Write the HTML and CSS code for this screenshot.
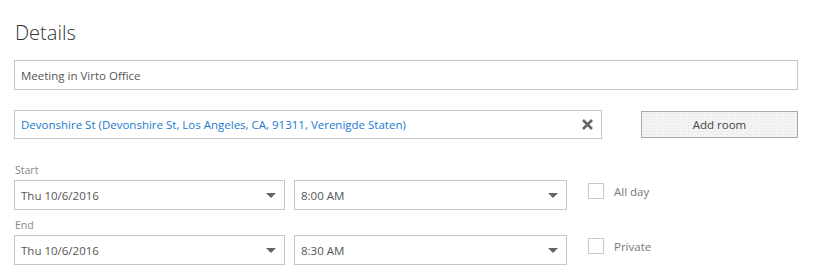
FILE: index.html
```html
<!DOCTYPE html>
<html lang="en">
  <head>
    <meta charset="UTF-8" />
    <title>Details</title>
    <link rel="stylesheet" href="styles.css">
  </head>
  <body>
    <div class="main-container">
      <h1 class="page-title">Details</h1>
      <div class="text-input subject">Meeting in Virto Office</div>

      <div class="location-row">
        <div class="text-input location">
          <span class="location-text">Devonshire St (Devonshire St, Los Angeles, CA, 91311, Verenigde Staten)</span>
          <svg class="clear-icon" width="13" height="13" viewBox="0 0 13 13">
            <path d="M2 2 L11 11 M11 2 L2 11" stroke="#666" stroke-width="2.6" />
          </svg>
        </div>
        <button class="btn" type="button">Add room</button>
      </div>

      <div class="label">Start</div>
      <div class="time-row">
        <div class="select date-select">Thu 10/6/2016<span class="caret"></span></div>
        <div class="select time-select">8:00 AM<span class="caret"></span></div>
        <label class="check"><span class="box"></span>All day</label>
      </div>

      <div class="label">End</div>
      <div class="time-row">
        <div class="select date-select">Thu 10/6/2016<span class="caret"></span></div>
        <div class="select time-select">8:30 AM<span class="caret"></span></div>
        <label class="check"><span class="box"></span>Private</label>
      </div>
    </div>
  </body>
</html>
```

FILE: styles.css
```css
* {
  box-sizing: border-box;
  margin: 0;
  padding: 0;
}

body {
  background: #fff;
  color: #555;
  font-family: 'Open Sans', 'Noto Sans', sans-serif;
  font-size: 11.5px;
}

.main-container {
  padding: 17px 16px 0 14px;
}

.page-title {
  font-size: 20px;
  font-weight: 300;
  color: #333;
  line-height: 32px;
  margin-left: 1px;
  height: 43px;
}

.text-input,
.select {
  display: flex;
  align-items: center;
  border: 1px solid #c6c6c6;
  height: 30px;
  padding: 0 6px;
  color: #555;
}

.subject {
  width: 784px;
}

.location-row {
  display: flex;
  align-items: center;
  margin-top: 20px;
}

.location {
  width: 588px;
  height: 29px;
  justify-content: space-between;
  padding-right: 7px;
}

.location-text {
  color: #1a7ad0;
}

.btn {
  margin-left: 39px;
  width: 157px;
  height: 27px;
  border: 1px solid #a8a8a8;
  background-color: #f3f3f3;
  background-image: radial-gradient(#e2e2e2 0.6px, transparent 0.8px);
  background-size: 3px 3px;
  font-family: inherit;
  font-size: 11.5px;
  color: #444;
}

.label {
  font-size: 10.5px;
  color: #888;
  line-height: 14px;
  margin-left: 1px;
  margin-bottom: 3px;
}

.location-row + .label {
  margin-top: 24px;
}

.time-row + .label {
  margin-top: 8px;
}

.time-row {
  display: flex;
  align-items: flex-start;
}

.select {
  justify-content: space-between;
  padding-right: 8px;
}

.date-select {
  width: 271px;
}

.time-select {
  width: 273px;
  margin-left: 9px;
}

.caret {
  width: 0;
  height: 0;
  border-left: 5px solid transparent;
  border-right: 5px solid transparent;
  border-top: 5px solid #666;
}

.check {
  display: flex;
  align-items: center;
  margin: 3px 0 0 21px;
  color: #777;
}

.box {
  width: 16px;
  height: 16px;
  border: 1px solid #c8c8c8;
  margin-right: 10px;
}
```
